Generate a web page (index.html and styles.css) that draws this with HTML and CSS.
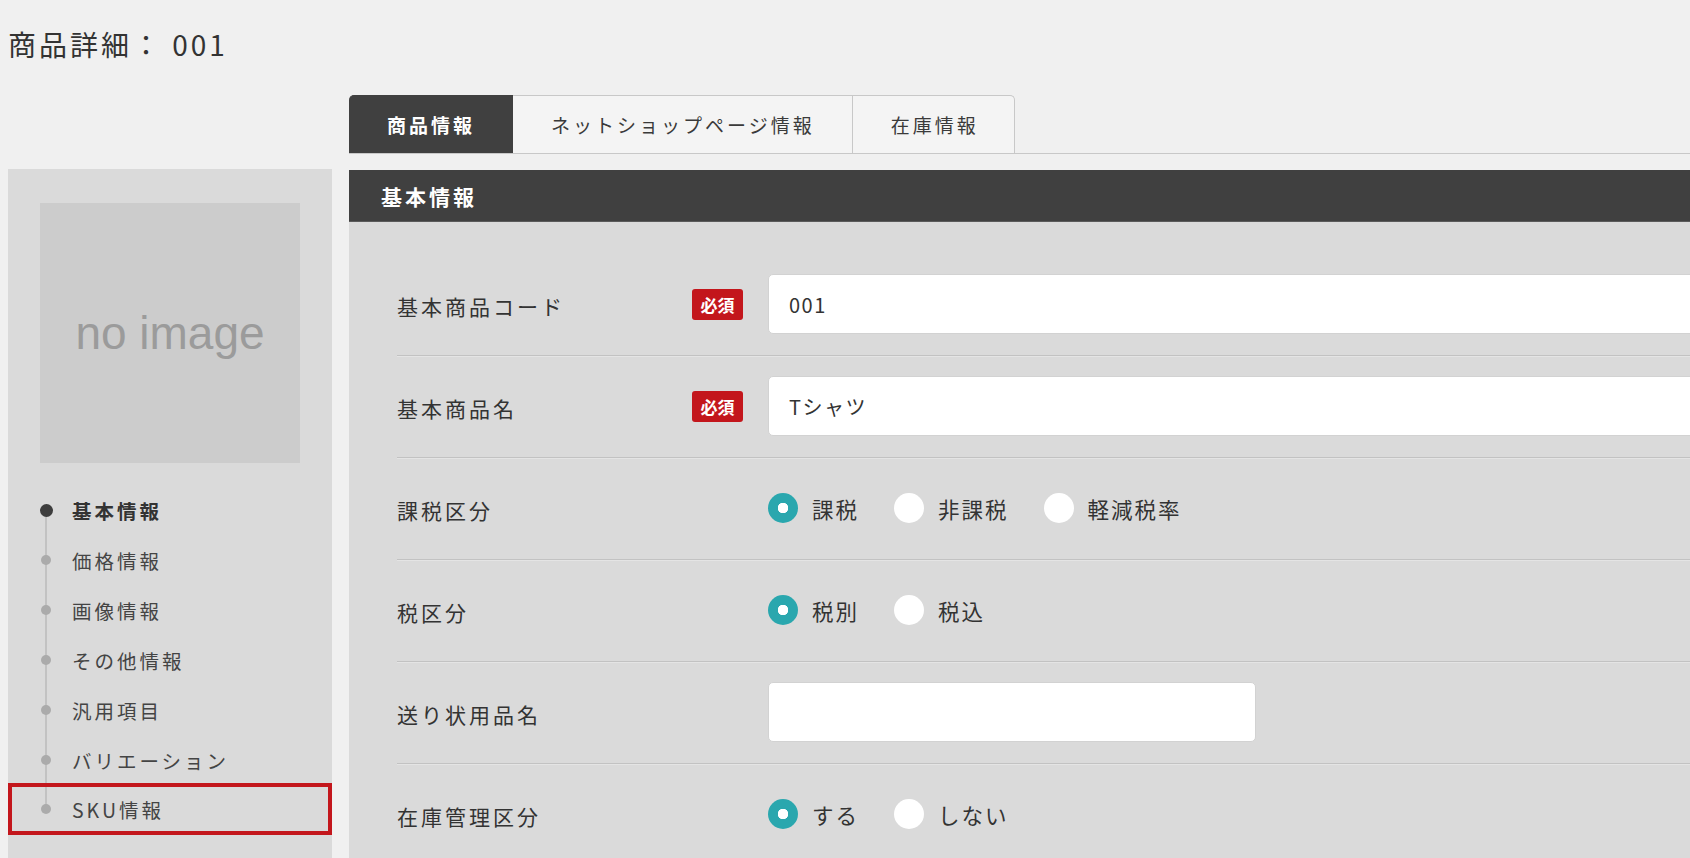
FILE: index.html
```html
<!DOCTYPE html>
<html lang="ja">
<head>
<meta charset="utf-8">
<title>商品詳細： 001</title>
<link rel="stylesheet" href="styles.css">
</head>
<body>
  <h1 class="page-title">商品詳細： 001</h1>

  <div class="layout">
    <aside class="sidebar">
      <div class="thumb"><span class="thumb-text">no image</span></div>
      <ul class="nav">
        <li class="nav-item nav-item--current">基本情報</li>
        <li class="nav-item">価格情報</li>
        <li class="nav-item">画像情報</li>
        <li class="nav-item">その他情報</li>
        <li class="nav-item">汎用項目</li>
        <li class="nav-item">バリエーション</li>
        <li class="nav-item nav-item--marked">SKU情報</li>
      </ul>
    </aside>

    <main class="main">
      <nav class="tabs">
        <a class="tab tab--active">商品情報</a>
        <a class="tab">ネットショップページ情報</a>
        <a class="tab tab--last">在庫情報</a>
      </nav>

      <h2 class="section-head">基本情報</h2>

      <form class="form">
        <div class="row">
          <div class="label-cell"><span class="label">基本商品コード</span><span class="badge">必須</span></div>
          <input class="input input--wide" type="text" value="001">
        </div>

        <div class="row">
          <div class="label-cell"><span class="label">基本商品名</span><span class="badge">必須</span></div>
          <input class="input input--wide" type="text" value="Tシャツ">
        </div>

        <div class="row">
          <div class="label-cell"><span class="label">課税区分</span></div>
          <div class="options">
            <label class="option"><input class="radio" type="radio" name="taxable" checked><span>課税</span></label>
            <label class="option"><input class="radio" type="radio" name="taxable"><span>非課税</span></label>
            <label class="option"><input class="radio" type="radio" name="taxable"><span>軽減税率</span></label>
          </div>
        </div>

        <div class="row">
          <div class="label-cell"><span class="label">税区分</span></div>
          <div class="options">
            <label class="option"><input class="radio" type="radio" name="taxtype" checked><span>税別</span></label>
            <label class="option"><input class="radio" type="radio" name="taxtype"><span>税込</span></label>
          </div>
        </div>

        <div class="row">
          <div class="label-cell"><span class="label">送り状用品名</span></div>
          <input class="input input--short" type="text" value="">
        </div>

        <div class="row">
          <div class="label-cell"><span class="label">在庫管理区分</span></div>
          <div class="options">
            <label class="option"><input class="radio" type="radio" name="stock" checked><span>する</span></label>
            <label class="option"><input class="radio" type="radio" name="stock"><span>しない</span></label>
          </div>
        </div>
      </form>
    </main>
  </div>
</body>
</html>
```

FILE: styles.css
```css
html, body {
  margin: 0;
  padding: 0;
  overflow: hidden;
}

body {
  background: #f0f0f0;
  color: #333;
  font-family: "Noto Sans CJK JP", "Noto Sans", sans-serif;
}

/* page heading */
.page-title {
  box-sizing: border-box;
  height: 95px;
  margin: 0;
  padding: 25px 0 0 8px;
  font-size: 28px;
  font-weight: 400;
  line-height: 38px;
  letter-spacing: 3px;
  color: #333;
}

.layout {
  display: flex;
  align-items: flex-start;
  gap: 17px;
  padding-left: 8px;
}

/* left column */
.sidebar {
  flex: none;
  width: 324px;
  margin-top: 74px;
  padding: 34px 0 40px;
  background: #dadada;
}

.thumb {
  display: flex;
  align-items: center;
  justify-content: center;
  width: 260px;
  height: 260px;
  margin-left: 32px;
  background: #cccccc;
}

.thumb-text {
  font-family: "Liberation Sans", Arial, sans-serif;
  font-size: 46px;
  color: #9b9b9b;
}

.nav {
  position: relative;
  margin: 22px 0 0;
  padding: 0;
  list-style: none;
}

.nav::before {
  content: "";
  position: absolute;
  left: 37px;
  top: 25px;
  bottom: 25px;
  width: 2px;
  background: #c2c2c2;
}

.nav-item {
  position: relative;
  box-sizing: border-box;
  display: flex;
  align-items: center;
  height: 50px;
  padding-left: 64px;
  font-size: 19.5px;
  letter-spacing: 3px;
  color: #444;
}

.nav-item::before {
  content: "";
  position: absolute;
  left: 33px;
  top: 50%;
  width: 10px;
  height: 10px;
  margin-top: -5px;
  border-radius: 50%;
  background: #ababab;
}

.nav-item--current {
  font-weight: 700;
  color: #333;
}

.nav-item--current::before {
  left: 32px;
  width: 13px;
  height: 13px;
  margin-top: -6.5px;
  background: #3d3d3d;
}

.nav-item--marked {
  height: 52px;
  margin-top: -2px;
  outline: 4px solid #c3161c;
  outline-offset: -4px;
}

/* right column */
.main {
  flex: 1;
  min-width: 0;
  overflow: hidden;
}

.tabs {
  display: flex;
  height: 58px;
  border-bottom: 1px solid #c8c8c8;
}

.tab {
  display: flex;
  align-items: center;
  padding: 0 37px 0 38px;
  border: 1px solid #c8c8c8;
  border-left: none;
  border-bottom: none;
  background: #f4f4f4;
  font-size: 19px;
  letter-spacing: 3px;
  color: #3a3a3a;
}

.tab--active {
  border-color: #404040;
  border-radius: 5px 0 0 0;
  background: #404040;
  color: #fff;
  font-weight: 700;
}

.tab--last {
  padding-right: 35px;
  border-radius: 0 5px 0 0;
}

.section-head {
  display: flex;
  align-items: center;
  box-sizing: border-box;
  height: 52px;
  margin: 16px 0 0;
  padding-left: 32px;
  background: #404040;
  border-bottom: 1px solid #5a5a5a;
  color: #fff;
  font-size: 21px;
  font-weight: 700;
  letter-spacing: 3px;
}

.form {
  margin: 0;
  padding: 32px 0 0 48px;
  background: #dadada;
}

.row {
  display: flex;
  align-items: center;
  box-sizing: border-box;
  min-height: 102px;
  padding: 20px 0 21px;
  border-bottom: 1px solid #c2c2c2;
  box-shadow: 0 1px 0 #e4e4e4;
}

.label-cell {
  display: flex;
  align-items: center;
  justify-content: space-between;
  flex: none;
  box-sizing: border-box;
  width: 371px;
  padding-right: 25px;
}

.label {
  padding-top: 3px;
  font-size: 21px;
  letter-spacing: 3px;
  color: #333;
}

.badge {
  display: flex;
  align-items: center;
  justify-content: center;
  width: 51px;
  height: 31px;
  border-radius: 3px;
  background: #c3161c;
  color: #fff;
  font-size: 17px;
  font-weight: 700;
  letter-spacing: 0;
}

.input {
  flex: none;
  box-sizing: border-box;
  height: 60px;
  margin: 0;
  padding: 0 20px;
  border: 1px solid #d2d2d2;
  border-radius: 5px;
  background: #fff;
  font-family: inherit;
  font-size: 20px;
  letter-spacing: 1.5px;
  color: #333;
  outline: none;
}

.input--wide {
  width: 1000px;
}

.input--short {
  width: 488px;
}

.options {
  display: flex;
  align-items: center;
  height: 60px;
}

.option {
  display: flex;
  align-items: center;
  gap: 14px;
  margin-right: 35px;
  font-size: 21.5px;
  letter-spacing: 2px;
  color: #333;
}

.radio {
  appearance: none;
  -webkit-appearance: none;
  flex: none;
  width: 30px;
  height: 30px;
  margin: 0;
  border-radius: 50%;
  background: #fff;
}

.radio:checked {
  background: radial-gradient(circle, #fff 0 5px, #2aa7ae 5.5px);
}
```
